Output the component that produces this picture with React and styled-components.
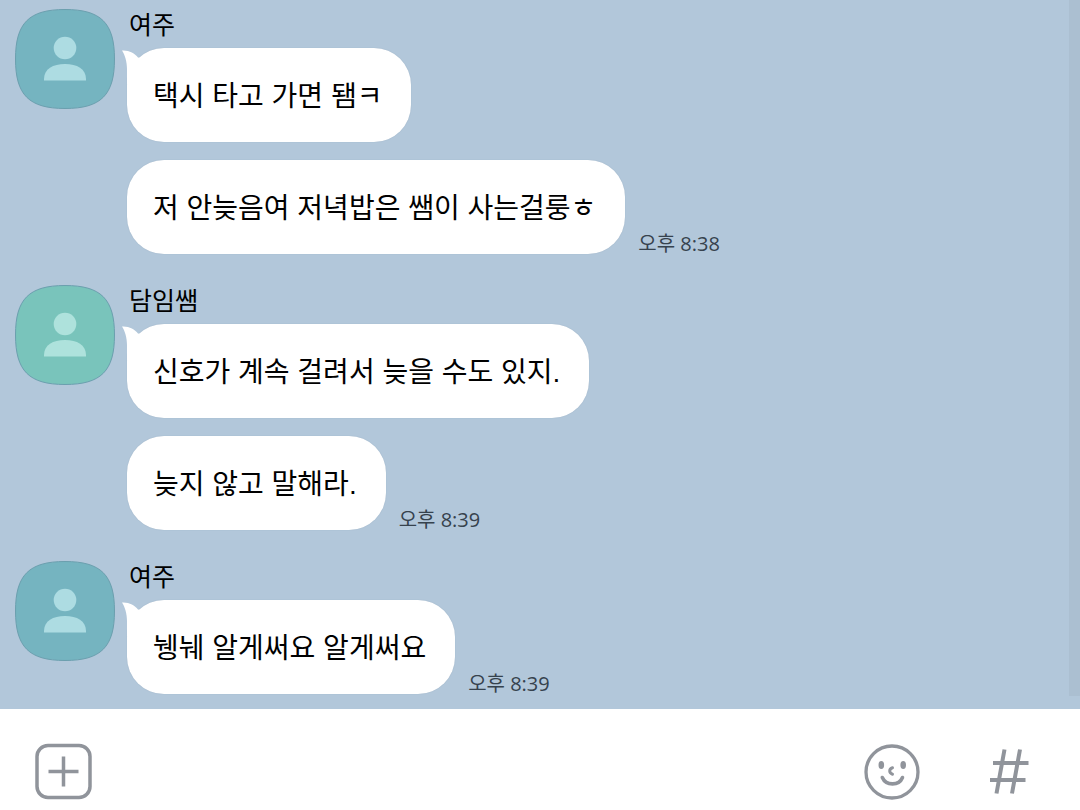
import React from "react";
import styled, { createGlobalStyle } from "styled-components";

const GlobalStyle = createGlobalStyle`
  *, *::before, *::after { box-sizing: border-box; }
  body {
    margin: 0;
    background: #fff;
    color: #000;
    font-family: "Noto Sans CJK KR", "Noto Sans", sans-serif;
  }
  button { font: inherit; }
`;

const Page = styled.div`
  min-height: 100vh;
  display: flex;
  flex-direction: column;
`;

const ChatArea = styled.main`
  flex: 1;
  display: flex;
  background: #b2c7da;
`;

const Messages = styled.div`
  flex: 1;
  display: flex;
  flex-direction: column;
  gap: 31px;
  padding: 9px 15px 15px;
`;

const ScrollTrack = styled.div`
  width: 11px;
  margin-bottom: 13px;
  background: #abbfd1;
`;

const Group = styled.section`
  display: flex;
  align-items: flex-start;
  gap: 12px;
`;

const AvatarSvg = styled.svg`
  flex: none;
  display: block;
  width: 100px;
  height: 100px;
`;

const Thread = styled.div`
  display: flex;
  flex-direction: column;
  align-items: flex-start;
`;

const Sender = styled.h2`
  margin: 0;
  padding: 0 2px 11px;
  font-size: 25px;
  line-height: 28px;
  font-weight: 400;
`;

const BubbleList = styled.div`
  display: flex;
  flex-direction: column;
  gap: 18px;
`;

const BubbleRow = styled.div`
  display: flex;
  align-items: flex-end;
  gap: 13px;
`;

const Bubble = styled.p`
  position: relative;
  margin: 0;
  padding: 29px 29px 25px 26px;
  border-radius: 37px;
  background: #fff;
  font-family: "Liberation Sans", "Noto Sans CJK KR", sans-serif;
  font-size: 28px;
  line-height: 40px;
  box-shadow: 0 0 1px rgba(70, 95, 120, 0.25);
`;

const TailSvg = styled.svg`
  position: absolute;
  left: -6px;
  top: 0;
  width: 32px;
  height: 40px;
`;

const Time = styled.time`
  font-family: "Open Sans", "Noto Sans CJK KR", sans-serif;
  font-size: 20px;
  line-height: 20px;
  color: #36424d;
  white-space: nowrap;
`;

const InputBar = styled.footer`
  display: flex;
  align-items: flex-start;
  gap: 60px;
  height: 101px;
  padding: 34px 42px 10px 35px;
  background: #fff;
`;

const IconButton = styled.button`
  display: block;
  padding: 0;
  border: 0;
  background: none;
  margin-right: ${(p) => (p.$push ? "auto" : "0")};
  cursor: pointer;
  svg { display: block; }
`;

function Avatar({ color, figure }) {
  return (
    <AvatarSvg viewBox="0 0 100 100" aria-hidden="true">
      <path
        d="M50 .5C86 .5 99.500 14 99.500 50S86 99.500 50 99.500.5 86 .5 50 14 .5 50 .5Z"
        fill={color}
        stroke="#6b9fae"
        strokeWidth="1"
      />
      <circle cx="50" cy="39" r="11.300" fill={figure} />
      <path d="M29 71.500V70C29 60 38 55 50 55S71 60 71 70V71.500Z" fill={figure} />
    </AvatarSvg>
  );
}

function Tail() {
  return (
    <TailSvg viewBox="0 0 32 40" aria-hidden="true">
      <path d="M1 2.500C8 2 13.500 5 17 9.500L32 12V36H6V21C6 14 4 7 1 2.500Z" fill="#fff" />
    </TailSvg>
  );
}

const conversation = [
  {
    sender: "여주",
    color: "#75b4c0",
    figure: "#addce2",
    time: "오후 8:38",
    lines: ["택시 타고 가면 \uB40Cㅋ", "저 안늦음여 저녁밥은 쌤이 사는걸룽ㅎ"],
  },
  {
    sender: "담임쌤",
    color: "#79c4bb",
    figure: "#aee2dc",
    time: "오후 8:39",
    lines: ["신호가 계속 걸려서 늦을 수도 있지.", "늦지 않고 말해라."],
  },
  {
    sender: "여주",
    color: "#75b4c0",
    figure: "#addce2",
    time: "오후 8:39",
    lines: ["\uB251\uB23C 알게써요 알게써요"],
  },
];

export default function App() {
  return (
    <Page>
      <GlobalStyle />
      <ChatArea>
        <Messages>
          {conversation.map((group, g) => (
            <Group key={g}>
              <Avatar color={group.color} figure={group.figure} />
              <Thread>
                <Sender>{group.sender}</Sender>
                <BubbleList>
                  {group.lines.map((line, i) => (
                    <BubbleRow key={line}>
                      <Bubble>
                        {i === 0 && <Tail />}
                        {line}
                      </Bubble>
                      {i === group.lines.length - 1 && <Time>{group.time}</Time>}
                    </BubbleRow>
                  ))}
                </BubbleList>
              </Thread>
            </Group>
          ))}
        </Messages>
        <ScrollTrack />
      </ChatArea>
      <InputBar>
        <IconButton type="button" aria-label="추가" $push>
          <svg width="57" height="57" viewBox="0 0 57 57" fill="none" stroke="#90949b">
            <rect x="2" y="2.500" width="53" height="52" rx="11" strokeWidth="3.500" />
            <path d="M28.500 13.500V43.500M13.500 28.500H43.500" strokeWidth="3.500" />
          </svg>
        </IconButton>
        <IconButton type="button" aria-label="이모티콘">
          <svg width="57" height="57" viewBox="0 0 57 57" fill="none" stroke="#90949b" strokeLinecap="round">
            <circle cx="28" cy="29" r="26" strokeWidth="3.300" />
            <ellipse cx="17.300" cy="22" rx="2.800" ry="4" fill="#90949b" stroke="none" />
            <ellipse cx="39.200" cy="22" rx="2.800" ry="4" fill="#90949b" stroke="none" />
            <path d="M28.500 24.800C24.800 26 24.800 30 28.500 31.200" strokeWidth="3" />
            <path d="M18.300 34.500C22 43 35 43 38.500 34.500" strokeWidth="3.600" />
          </svg>
        </IconButton>
        <IconButton type="button" aria-label="샵 검색">
          <svg width="57" height="57" viewBox="0 0 57 57" fill="none" stroke="#90949b" strokeWidth="4">
            <path d="M23.500 6.500L15.500 50.500M39 6.500L31 50.500M12 20H47.500M9 37H44.500" />
          </svg>
        </IconButton>
      </InputBar>
    </Page>
  );
}
